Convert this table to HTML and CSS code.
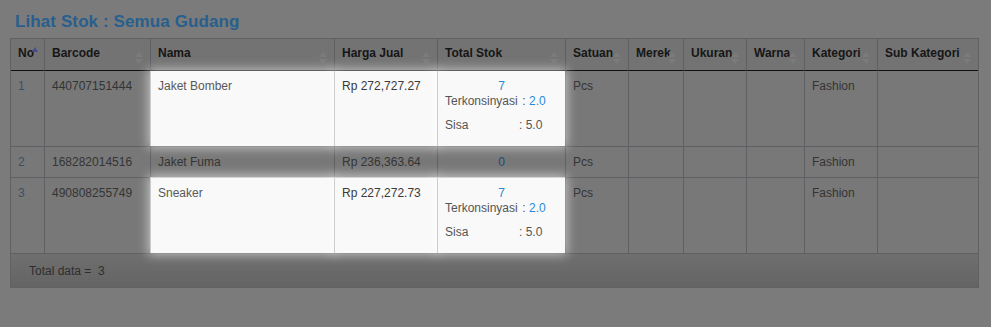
FILE: index.html
```html
<!DOCTYPE html>
<html lang="id">
<head>
  <meta charset="UTF-8">
  <title>Lihat Stok</title>
  <link rel="stylesheet" href="styles.css">
</head>
<body>

<div class="page">
  <h2 class="page-title">Lihat Stok : Semua Gudang</h2>

  <table class="stok-table">
    <colgroup>
      <col style="width: 33px">
      <col style="width: 106px">
      <col style="width: 184px">
      <col style="width: 103px">
      <col style="width: 128px">
      <col style="width: 63px">
      <col style="width: 55px">
      <col style="width: 63px">
      <col style="width: 58px">
      <col style="width: 73px">
      <col style="width: 101px">
    </colgroup>
    <thead>
      <tr>
        <th class="sort-asc">No</th>
        <th class="sortable">Barcode</th>
        <th class="sortable">Nama</th>
        <th class="sortable">Harga Jual</th>
        <th class="sortable">Total Stok</th>
        <th class="sortable">Satuan</th>
        <th class="sortable">Merek</th>
        <th class="sortable">Ukuran</th>
        <th class="sortable">Warna</th>
        <th class="sortable">Kategori</th>
        <th class="sortable">Sub Kategori</th>
      </tr>
    </thead>
    <tbody>
      <tr>
        <td class="num">1</td>
        <td>440707151444</td>
        <td class="lit nama">Jaket Bomber</td>
        <td class="lit">Rp 272,727.27</td>
        <td class="lit">
          <div class="stok-total">7</div>
          <div class="stok-line"><span class="stok-label">Terkonsinyasi</span> : <span class="stok-val">2.0</span></div>
          <div class="stok-line stok-sisa"><span class="stok-label">Sisa</span>: 5.0</div>
        </td>
        <td>Pcs</td>
        <td></td>
        <td></td>
        <td></td>
        <td>Fashion</td>
        <td></td>
      </tr>
      <tr>
        <td class="num">2</td>
        <td>168282014516</td>
        <td>Jaket Fuma</td>
        <td>Rp 236,363.64</td>
        <td class="stok-zero">0</td>
        <td>Pcs</td>
        <td></td>
        <td></td>
        <td></td>
        <td>Fashion</td>
        <td></td>
      </tr>
      <tr>
        <td class="num">3</td>
        <td>490808255749</td>
        <td class="lit nama">Sneaker</td>
        <td class="lit">Rp 227,272.73</td>
        <td class="lit">
          <div class="stok-total">7</div>
          <div class="stok-line"><span class="stok-label">Terkonsinyasi</span> : <span class="stok-val">2.0</span></div>
          <div class="stok-line stok-sisa"><span class="stok-label">Sisa</span>: 5.0</div>
        </td>
        <td>Pcs</td>
        <td></td>
        <td></td>
        <td></td>
        <td>Fashion</td>
        <td></td>
      </tr>
    </tbody>
    <tfoot>
      <tr>
        <td colspan="11">Total data = &nbsp;3</td>
      </tr>
    </tfoot>
  </table>
</div>

</body>
</html>
```

FILE: styles.css
```css
body {
  margin: 0;
  background-color: #7b7b7b;
  font-family: "Liberation Sans", Arial, sans-serif;
  font-size: 12px;
  color: #333;
}

.page {
  padding: 12px 10px 0 10px;
}

.page-title {
  margin: 0 0 6px 5px;
  font-size: 17px;
  line-height: 20px;
  font-weight: bold;
  letter-spacing: 0.1px;
  color: #275f8e;
}

/* tabel stok */
.stok-table {
  table-layout: fixed;
  width: 969px;
  border-collapse: separate;
  border-spacing: 0;
  border: 1px solid #5f6164;
  line-height: 14px;
}

.stok-table th,
.stok-table td {
  border-left: 1px solid #5e6064;
  text-align: left;
  vertical-align: top;
  white-space: nowrap;
  overflow: hidden;
}

.stok-table th:first-child,
.stok-table td:first-child {
  border-left: none;
}

.stok-table th {
  position: relative;
  padding: 7px 18px 10px 7px;
  background-color: #737373;
  color: #161616;
  font-weight: bold;
  border-bottom: 1px solid #111;
}

/* panah sort ala datatables */
.sortable::before,
.sortable::after {
  content: "";
  position: absolute;
  right: 7px;
  border-left: 4px solid transparent;
  border-right: 4px solid transparent;
}

.sortable::before {
  top: 13px;
  border-bottom: 5px solid #7b7b7b;
}

.sortable::after {
  top: 20px;
  border-top: 5px solid #7b7b7b;
}

.sort-asc::after {
  content: "";
  position: absolute;
  right: 6px;
  top: 8px;
  border-left: 3px solid transparent;
  border-right: 3px solid transparent;
  border-bottom: 5px solid #4b4b8c;
}

.stok-table td {
  padding: 8px 7px;
  background-color: #787878;
  color: #343434;
}

.stok-table tbody tr + tr td {
  border-top: 1px solid #5e6064;
}

.stok-table td.num {
  color: #3a4f66;
}

.stok-table td.stok-zero {
  text-align: center;
  color: #1d4a72;
}

/* sel yang disorot */
.stok-table td.lit {
  position: relative;
  background-color: #f9f9f9;
  color: #3a3a3a;
  border-left-color: #cdcdcd;
  box-shadow: 0 0 10px 2px rgba(255, 255, 255, 0.55);
}

.stok-table tbody tr + tr td.lit {
  border-top-color: #d4d4d4;
}

.stok-table td.nama {
  color: #585858;
}

.stok-total {
  text-align: center;
  color: #2a8ad9;
}

.stok-line {
  margin-top: 1px;
  color: #555;
}

.stok-label {
  display: inline-block;
  min-width: 74px;
}

.stok-val {
  color: #2a8ad9;
}

.stok-sisa {
  margin: 10px 0 6px 0;
}

.stok-table tfoot td {
  padding: 10px 18px 9px 18px;
  border-top: 1px solid #5e6064;
  background: linear-gradient(#6f6f6f, #646464);
  color: #2e2e2e;
}
```
